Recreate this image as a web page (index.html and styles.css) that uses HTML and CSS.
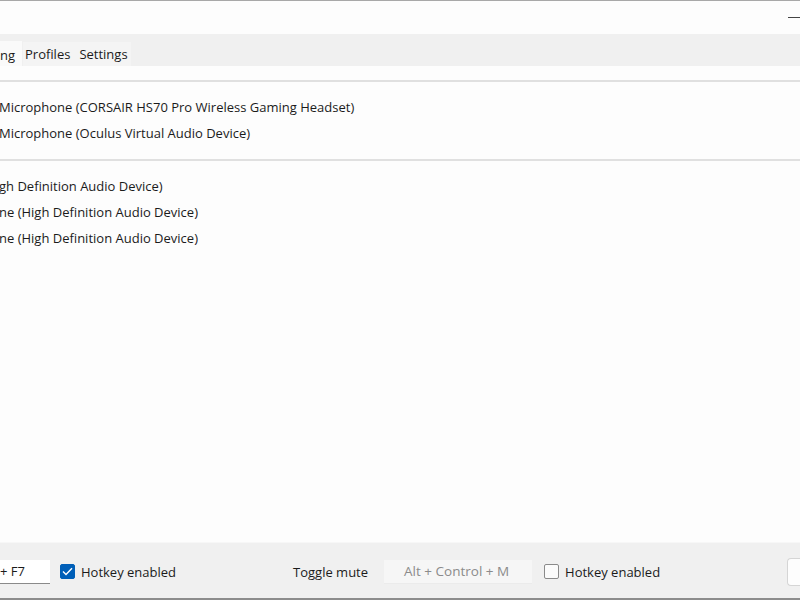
FILE: index.html
```html
<!DOCTYPE html>
<html>
<head>
<meta charset="utf-8">
<link rel="stylesheet" href="styles.css">
</head>
<body>
<div class="window">
  <div class="titlebar">
    <span class="min-btn"></span>
  </div>
  <div class="tabstrip">
    <div class="tab tab-active">ng</div>
    <div class="tab-group">
      <div class="tab">Profiles</div>
      <div class="tab">Settings</div>
    </div>
  </div>
  <div class="content">
    <div class="section">
      <div class="row">Microphone (CORSAIR HS70 Pro Wireless Gaming Headset)</div>
      <div class="row">Microphone (Oculus Virtual Audio Device)</div>
    </div>
    <div class="section">
      <div class="row">gh Definition Audio Device)</div>
      <div class="row">ne (High Definition Audio Device)</div>
      <div class="row">ne (High Definition Audio Device)</div>
    </div>
  </div>
  <div class="footer">
    <div class="hotkey-input">+ F7</div>
    <label class="check">
      <span class="box box-checked">
        <svg width="11" height="9" viewBox="0 0 11 9"><path d="M1 4.6 L4 7.5 L10 1.2" fill="none" stroke="#fff" stroke-width="1.4"/></svg>
      </span>
      Hotkey enabled
    </label>
    <span class="label-toggle">Toggle mute</span>
    <div class="hotkey-input disabled">Alt + Control + M</div>
    <label class="check check-2">
      <span class="box"></span>
      Hotkey enabled
    </label>
    <div class="spacer"></div>
    <div class="btn"></div>
  </div>
</div>
</body>
</html>
```

FILE: styles.css
```css
* { box-sizing: border-box; }
html, body {
  margin: 0;
  padding: 0;
  width: 800px;
  height: 600px;
  overflow: hidden;
  background: #ffffff;
  font-family: "Open Sans", "Noto Sans", "Liberation Sans", sans-serif;
  font-size: 13px;
  color: #1b1b1b;
}
.window {
  width: 800px;
  height: 600px;
  display: flex;
  flex-direction: column;
  border-top: 1px solid #a8a8a8;
  border-bottom: 2px solid #8c8c8c;
  background: #fdfdfd;
}
.titlebar {
  height: 33px;
  flex: none;
  display: flex;
  justify-content: flex-end;
  align-items: flex-start;
  padding-top: 16px;
}
.min-btn {
  display: block;
  width: 12px;
  height: 1px;
  background: #444;
}
.tabstrip {
  flex: none;
  height: 32px;
  background: #f0f0f0;
  display: flex;
  align-items: flex-end;
}
.tab {
  height: 24px;
  line-height: 24px;
  padding: 2px 0 0 0;
  color: #1b1b1b;
}
.tab-active {
  background: #fafafa;
  width: 22px;
  margin-right: 1px;
  height: 25px;
}
.tab-group {
  display: flex;
  background: #f4f4f4;
  height: 24px;
  width: 108px;
}
.tab-group .tab { padding: 0 0 0 2px; height: 24px; line-height: 25px; }
.tab-group .tab + .tab { padding-left: 9px; }
.content {
  flex: 1;
  background: #fdfdfd;
  padding-top: 14px;
}
.section {
  border-top: 2px solid #e0e0e0;
  padding: 12px 0 13px 0;
}
.row {
  height: 26px;
  line-height: 26px;
  white-space: nowrap;
  margin-left: -1px;
}
.footer {
  flex: none;
  height: 56px;
  background: #f0f0f0;
  border-top: 1px solid #f7f7f7;
  display: flex;
  align-items: center;
  padding-top: 2px;
}
.hotkey-input {
  height: 24px;
  line-height: 23px;
  width: 50px;
  background: #ffffff;
  border-bottom: 1px solid #8a8a8a;
  padding-left: 0;
  white-space: nowrap;
}
.hotkey-input.disabled {
  width: 148px;
  background: #f6f6f6;
  border-bottom: 1px solid #ebebeb;
  color: #8b8b8b;
  padding-left: 20px;
  margin-left: 16px;
  font-size: 13.5px;
}
.check {
  display: flex;
  align-items: center;
  margin-left: 10px;
}
.check-2 { margin-left: 12px; }
.box {
  width: 15px;
  height: 15px;
  border: 1px solid #8a8a8a;
  border-radius: 2px;
  background: #fbfbfb;
  margin-right: 6px;
  display: flex;
  align-items: center;
  justify-content: center;
}
.box-checked {
  background: #005fb8;
  border-color: #005fb8;
}
.label-toggle {
  margin-left: 117px;
}
.spacer { flex: 1; }
.btn {
  width: 13px;
  height: 28px;
  background: #fdfdfd;
  border: 1px solid #d5d5d5;
  border-right: none;
  border-radius: 4px 0 0 4px;
}
```
